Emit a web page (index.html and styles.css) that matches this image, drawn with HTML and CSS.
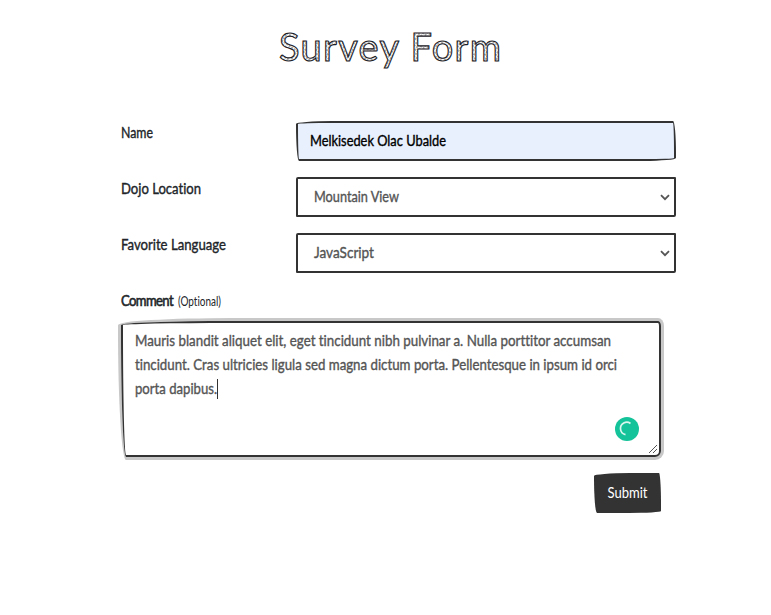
FILE: index.html
```html
<!DOCTYPE html>
<html lang="en">
<head>
<meta charset="utf-8">
<title>Survey Form</title>
<link rel="stylesheet" href="styles.css">
</head>
<body>
<main class="survey">
  <h1 class="title"><svg class="title-art" viewBox="0 0 240 60"><defs><pattern id="hatch" width="3" height="3" patternUnits="userSpaceOnUse" patternTransform="rotate(35)"><rect width="3" height="3" fill="#fff"/><path d="M0 1h2" stroke="#444" stroke-width=".9"/></pattern></defs><text x="9" y="40.5" textLength="222" lengthAdjust="spacing">Survey Form</text></svg></h1>
  <div class="row">
    <div class="label"><svg class="line"><text x="0" y="17" textLength="32" lengthAdjust="spacingAndGlyphs">Name</text></svg></div>
    <div class="control filled"><svg class="line"><text x="12" y="17" textLength="136" lengthAdjust="spacingAndGlyphs">Melkisedek Olac Ubalde</text></svg></div>
  </div>
  <div class="row">
    <div class="label"><svg class="line"><text x="0" y="17" textLength="80" lengthAdjust="spacingAndGlyphs">Dojo Location</text></svg></div>
    <div class="control select"><svg class="line"><text x="16" y="17" textLength="85" lengthAdjust="spacingAndGlyphs">Mountain View</text></svg><svg class="chevron" viewBox="0 0 10 7"><path d="M1 1.2l4 4 4-4"/></svg></div>
  </div>
  <div class="row">
    <div class="label"><svg class="line"><text x="0" y="17" textLength="105" lengthAdjust="spacingAndGlyphs">Favorite Language</text></svg></div>
    <div class="control select"><svg class="line"><text x="16" y="17" textLength="60" lengthAdjust="spacingAndGlyphs">JavaScript</text></svg><svg class="chevron" viewBox="0 0 10 7"><path d="M1 1.2l4 4 4-4"/></svg></div>
  </div>
  <div class="comment-label"><svg class="line comment-name"><text class="strong" x="0" y="17" textLength="52" lengthAdjust="spacingAndGlyphs">Comment</text></svg><svg class="line optional"><text x="0" y="17" textLength="43" lengthAdjust="spacingAndGlyphs">(Optional)</text></svg></div>
  <div class="comment">
    <svg class="line"><text x="12" y="17" textLength="476" lengthAdjust="spacingAndGlyphs">Mauris blandit aliquet elit, eget tincidunt nibh pulvinar a. Nulla porttitor accumsan</text></svg>
    <svg class="line"><text x="12" y="17" textLength="482" lengthAdjust="spacingAndGlyphs">tincidunt. Cras ultricies ligula sed magna dictum porta. Pellentesque in ipsum id orci</text></svg>
    <svg class="line"><text x="12" y="17" textLength="82" lengthAdjust="spacingAndGlyphs">porta dapibus.</text><path class="caret" d="M94.500 2v20"/></svg>
    <svg class="spinner" viewBox="0 0 24 24"><circle cx="12" cy="12" r="12" fill="#15c39a"/><path d="M15.500 6.500A6.300 6.300 0 0 0 5.500 12A6.300 6.300 0 0 0 10.500 17.600" fill="none" stroke="#d9f7ee" stroke-width="1.700"/></svg>
    <svg class="grip" viewBox="0 0 10 10"><path d="M1 9l8-8M5 9l4-4"/></svg>
  </div>
  <div class="actions"><div class="submit"><svg class="line"><text x="13.500" y="17" textLength="40" lengthAdjust="spacingAndGlyphs">Submit</text></svg></div></div>
</main>
</body>
</html>
```
FILE: styles.css
```css
* { box-sizing: border-box; }
body {
  margin: 0;
  background: #fff;
  color: #212529;
  font-family: Lato, sans-serif;
  font-size: 16px;
  font-variant-ligatures: none;
}
.survey { width: 555px; margin-left: 121px; padding-top: 20px; }
.title { display: flex; margin: 0 0 41px 149px; height: 60px; }
.title-art { width: 240px; height: 60px; overflow: visible; }
.title-art text {
  font: 400 38px Lato, sans-serif;
  fill: url(#hatch);
  stroke: #1b2026;
  stroke-width: 1.1px;
}
.row { display: grid; grid-template-columns: 175px 380px; height: 40px; margin-bottom: 16px; }
.line { display: block; width: 100%; height: 24px; overflow: visible; }
.line text { fill: currentColor; stroke: currentColor; stroke-width: .4px; }
.control {
  display: flex;
  align-items: center;
  border: 2px solid #333;
  background: #fff;
  color: #555;
}
.filled {
  border-radius: 36px 3px 32px 3px / 3px 32px 3px 36px;
  background: #e8f0fe;
  color: #000;
}
.select { border-radius: 2px 1px 2px 1px; }
.chevron { flex: none; width: 10px; height: 7px; margin-right: 4px; }
.chevron path { fill: none; stroke: #555; stroke-width: 1.8; }
.comment-label { display: flex; gap: 5px; height: 32px; }
.comment-name { width: 52px; }
.optional { width: 43px; font-size: 12.5px; }
.line .strong { font-size: 15px; stroke-width: .6px; letter-spacing: -.7px; }
.optional text { stroke: none; }
.comment {
  position: relative;
  width: 540px;
  height: 136px;
  padding-top: 6px;
  border: 2px solid #333;
  border-radius: 110px 3px 6px 5px / 4px 5px 6px 128px;
  color: #555;
  box-shadow: 0 0 0 3px #c8c8c8;
}
.caret { stroke: #333; stroke-width: 1; }
.spinner { position: absolute; right: 20px; bottom: 14px; width: 24px; height: 24px; }
.grip { position: absolute; right: 1px; bottom: 1px; width: 10px; height: 10px; }
.grip path { stroke: #555; stroke-width: 1; }
.actions { display: flex; justify-content: flex-end; width: 540px; margin-top: 16px; }
.submit {
  width: 67px;
  height: 40px;
  padding-top: 8px;
  border-radius: 36px 2px 32px 3px / 3px 32px 2px 36px;
  background: #333;
  color: #fff;
}
.submit text { stroke: none; }
```
